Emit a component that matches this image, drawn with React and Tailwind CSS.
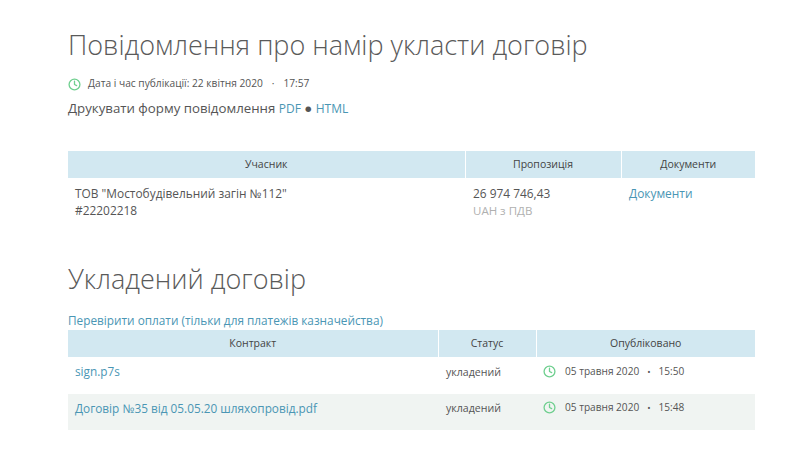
import React from 'react';
import { Clock } from 'lucide-react';

function PublishedAt({ date, time }) {
    return (
        <div className="flex items-center text-[10.1px] text-[#555]">
            <Clock className="w-[13px] h-[13px] text-[#6fcf8f] mr-[9px]" strokeWidth={2.4} />
            <span>{date}</span>
            <span className="mx-[8px] text-[9px]">•</span>
            <span>{time}</span>
        </div>
    );
}

const thClass = 'bg-[#d2e8f1] font-normal text-[10.5px] text-[#444] text-center h-[27px] p-0 border-r border-white last:border-r-0';

export default function App() {
    return (
        <div className="w-[800px] h-[464px] bg-white overflow-hidden pl-[68px] pr-[45px] pt-[26px] font-['Open_Sans',sans-serif] text-[#555]">
            <h1 className="font-light text-[27px] leading-[38px] text-[#5a5a5a]">
                Повідомлення про намір укласти договір
            </h1>

            <div className="flex items-center mt-[12px] text-[10.2px] text-[#555] h-[16px]">
                <Clock className="w-[13px] h-[13px] text-[#6fcf8f] mr-[7px]" strokeWidth={2.4} />
                <span>Дата і час публікації: 22 квітня 2020</span>
                <span className="mx-[9px]">·</span>
                <span>17:57</span>
            </div>

            <div className="mt-[7px] text-[13.25px] leading-[18px] text-[#555]">
                Друкувати форму повідомлення <a className="text-[#4a96b4] text-[12px]">PDF</a> ● <a className="text-[#4a96b4] text-[12px]">HTML</a>
            </div>

            {/* Учасник */}
            <table className="table-fixed w-[687px] mt-[33px] border-collapse">
                <colgroup>
                    <col className="w-[397px]" />
                    <col className="w-[156px]" />
                    <col className="w-[134px]" />
                </colgroup>
                <thead>
                    <tr>
                        <th className={thClass}>Учасник</th>
                        <th className={thClass}>Пропозиція</th>
                        <th className={thClass}>Документи</th>
                    </tr>
                </thead>
                <tbody>
                    <tr className="align-top text-[11.9px] leading-[17px]">
                        <td className="pl-[7px] pt-[7px] h-[50px]">
                            <div>ТОВ "Мостобудівельний загін №112"</div>
                            <div>#22202218</div>
                        </td>
                        <td className="pl-[8px] pt-[7px]">
                            <div>26 974 746,43</div>
                            <div className="text-[#b0b0b0] text-[11.5px]">UAH з ПДВ</div>
                        </td>
                        <td className="pl-[8px] pt-[7px] text-[#4a96b4]">Документи</td>
                    </tr>
                </tbody>
            </table>

            <h2 className="font-light text-[27px] leading-[34px] text-[#5a5a5a] mt-[34px]">Укладений договір</h2>

            <a className="block mt-[16px] text-[11.8px] leading-[16px] text-[#4a96b4]">
                Перевірити оплати (тільки для платежів казначейства)
            </a>

            {/* Контракт */}
            <table className="table-fixed w-[687px] mt-[2px] border-collapse">
                <colgroup>
                    <col className="w-[370px]" />
                    <col className="w-[98px]" />
                    <col className="w-[219px]" />
                </colgroup>
                <thead>
                    <tr>
                        <th className={thClass}>Контракт</th>
                        <th className={thClass}>Статус</th>
                        <th className={thClass}>Опубліковано</th>
                    </tr>
                </thead>
                <tbody>
                    <tr className="align-top h-[37px]">
                        <td className="pl-[7px] pt-[6px] text-[11.8px] leading-[17px] text-[#4a96b4]">sign.p7s</td>
                        <td className="pl-[8px] pt-[7px] text-[10.6px] leading-[16px]">укладений</td>
                        <td className="pl-[7px] pt-[7px]"><PublishedAt date="05 травня 2020" time="15:50" /></td>
                    </tr>
                    <tr className="align-top h-[36px] bg-[#f0f4f2]">
                        <td className="pl-[7px] pt-[6px] text-[11.8px] leading-[17px] text-[#4a96b4]">Договір №35 від 05.05.20 шляхопровід.pdf</td>
                        <td className="pl-[8px] pt-[6px] text-[10.6px] leading-[16px]">укладений</td>
                        <td className="pl-[7px] pt-[6px]"><PublishedAt date="05 травня 2020" time="15:48" /></td>
                    </tr>
                </tbody>
            </table>
        </div>
    );
}
